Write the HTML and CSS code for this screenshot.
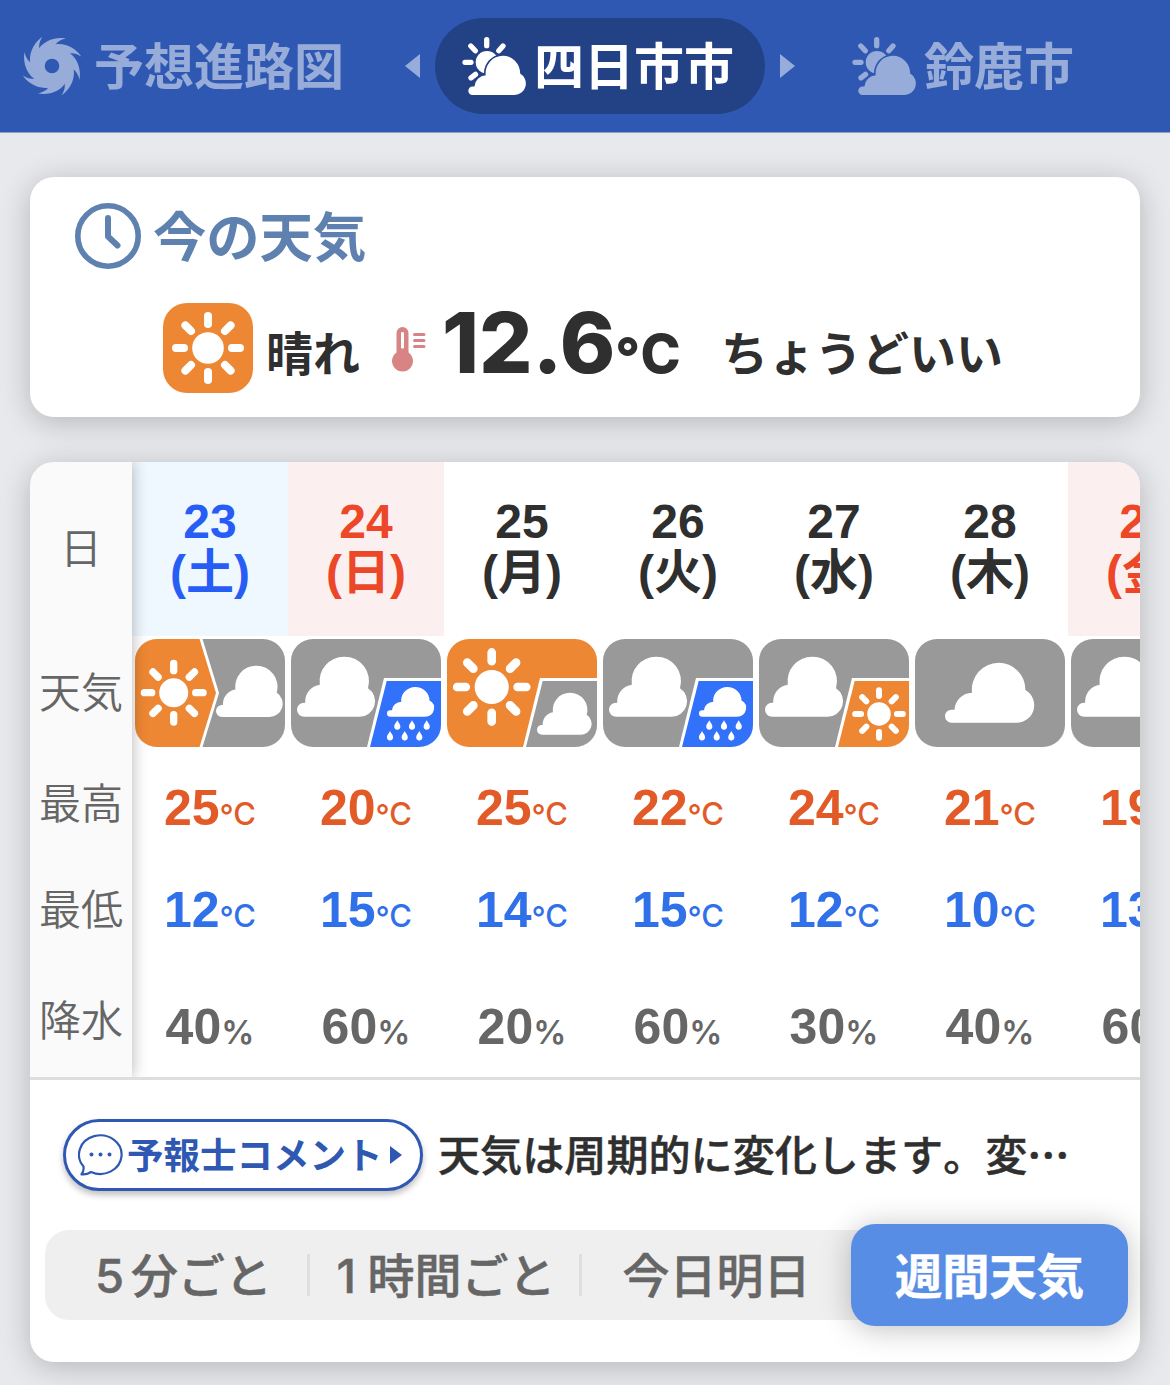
FILE: index.html
```html
<!DOCTYPE html>
<html lang="ja">
<head>
  <meta charset="UTF-8">
  <meta name="viewport" content="width=device-width, initial-scale=1.0">
  <title>四日市市の天気</title>
  <link rel="stylesheet" href="styles.css">
</head>
<body>

  <!-- Shared icon shapes -->
  <svg class="defs" width="0" height="0">
    <defs>
      <g id="sun">
        <circle r="15.8" fill="#fff"/>
        <path d="M0-24V-32M0 24V32M-24 0H-32M24 0H32M-17-17L-22.6-22.6M17-17L22.6-22.6M-17 17L-22.6 22.6M17 17L22.6 22.6" stroke="#fff" stroke-width="8" stroke-linecap="round"/>
      </g>
      <path id="cloud" d="M6.5 60A6.5 6.5 0 0 1 6.5 47H9.5A18 18 0 0 1 27 30A27 27 0 0 1 53.5 0A27 27 0 0 1 80.4 27.3A17.5 17.5 0 0 1 71.8 60Z"/>
      <path id="cloud-tall" d="M7 60A7 7 0 0 1 7 46H8.2A17 17 0 0 1 22.8 28A24.5 24.5 0 0 1 47 0A24.5 24.5 0 0 1 71 31.5A15.5 15.5 0 0 1 62 60Z"/>
      <path id="drop" d="M0 0C.8 2.2 3.1 3.9 3.1 6.3A3.1 3.1 0 0 1-3.1 6.3C-3.1 3.9-.8 2.2 0 0Z"/>
      <path id="blade" d="M-19.5-6C-20-18-10-28 1-30.8C-4-27-7-22-6-16Z"/>
      <mask id="cloud-gap">
        <rect width="64" height="58" fill="#fff"/>
        <use href="#cloud" transform="translate(6.3 18.7) scale(.645 .655)" fill="#000" stroke="#000" stroke-width="5"/>
      </mask>
      <symbol id="partly" viewBox="0 0 64 58">
        <g mask="url(#cloud-gap)">
          <circle cx="25" cy="25.3" r="11.3" fill="#fff"/>
        </g>
        <path d="M24.7 2.7V8.7M3 25.3H9M8.8 9L13.3 13.8M36.8 13.8L41 9M9 40.8L13.5 37.3" stroke="#fff" stroke-width="5.3" stroke-linecap="round"/>
        <use href="#cloud" transform="translate(6.3 18.7) scale(.645 .655)" fill="#fff"/>
      </symbol>
      <symbol id="w-cloud-rain" viewBox="0 0 150 108">
        <rect width="150" height="108" fill="#999"/>
        <use href="#cloud-tall" x="6" y="17.7" fill="#fff"/>
        <path d="M93 39H150V108H76Z" fill="#fff"/>
        <path d="M95.7 42H150V108H79Z" fill="#3272fa"/>
        <use href="#cloud" transform="translate(96 48) scale(.528 .495)" fill="#fff"/>
        <g fill="#fff">
          <use href="#drop" x="106.3" y="81.3"/>
          <use href="#drop" x="121" y="81.3"/>
          <use href="#drop" x="135.7" y="81.3"/>
          <use href="#drop" x="99" y="92"/>
          <use href="#drop" x="113.7" y="92"/>
          <use href="#drop" x="128.3" y="92"/>
        </g>
      </symbol>
    </defs>
  </svg>

  <!-- Area navigation -->
  <header class="header">
    <div class="area area-typhoon">
      <svg class="typhoon" viewBox="-31 -31 62 62" fill="#fff">
        <circle r="13.8" fill="none" stroke="#fff" stroke-width="13"/>
        <use href="#blade" transform="rotate(-20)"/>
        <use href="#blade" transform="rotate(25)"/>
        <use href="#blade" transform="rotate(70)"/>
        <use href="#blade" transform="rotate(115)"/>
        <use href="#blade" transform="rotate(160)"/>
        <use href="#blade" transform="rotate(205)"/>
        <use href="#blade" transform="rotate(250)"/>
        <use href="#blade" transform="rotate(295)"/>
      </svg>
      <span>予想進路図</span>
    </div>
    <span class="arrow arrow-left"></span>
    <div class="area area-current">
      <svg class="partly"><use href="#partly"/></svg>
      <span>四日市市</span>
    </div>
    <span class="arrow arrow-right"></span>
    <div class="area area-next">
      <svg class="partly"><use href="#partly"/></svg>
      <span>鈴鹿市</span>
    </div>
  </header>

  <!-- Current weather -->
  <section class="card now">
    <h2 class="now-title">
      <svg class="clock" viewBox="0 0 66 66" fill="none" stroke="#5f81b0">
        <circle cx="33" cy="33" r="30.2" stroke-width="5.6"/>
        <path d="M33 15V33.5L42.5 42.5" stroke-width="6" stroke-linecap="round" stroke-linejoin="round"/>
      </svg>
      <span>今の天気</span>
    </h2>
    <div class="now-body">
      <svg class="now-icon" viewBox="-45 -45 90 90"><use href="#sun"/></svg>
      <span class="now-label">晴れ</span>
      <svg class="thermo" viewBox="0 0 34 46">
        <path d="M4.5 6A6 6 0 0 1 16.5 6V25.5A10.5 10.5 0 1 1 4.5 25.5Z" fill="#d98484"/>
        <rect x="9" y="5" width="3" height="16.5" rx="1.2" fill="#fff"/>
        <path d="M22.5 7.5H32M22.5 13.5H32M22.5 19.5H32" stroke="#d98484" stroke-width="3" stroke-linecap="round"/>
      </svg>
      <span class="now-temp">12.6<small><i>°</i>C</small></span>
      <span class="now-feel">ちょうどいい</span>
    </div>
  </section>

  <!-- Weekly forecast -->
  <section class="card week">
    <div class="table">
      <div class="labels">
        <div class="l-date">日</div>
        <div class="l-icon">天気</div>
        <div class="l-temp">最高</div>
        <div class="l-temp">最低</div>
        <div class="l-rain">降水</div>
      </div>
      <div class="days">
        <div class="day">
          <div class="date sat">23<br>(土)</div>
          <svg class="tile" viewBox="0 0 150 108">
            <rect width="150" height="108" fill="#999"/>
            <path d="M0 0H67.5L84 54L67.5 108H0Z" fill="#fff"/>
            <path d="M0 0H64.5L81 54L64.5 108H0Z" fill="#ed8733"/>
            <use href="#sun" transform="translate(38.7 53.7) scale(.917)"/>
            <use href="#cloud-tall" transform="translate(81 26.7) scale(.854)" fill="#fff"/>
          </svg>
          <div class="high">25<small><i>°</i>C</small></div>
          <div class="low">12<small><i>°</i>C</small></div>
          <div class="rain">40<small>%</small></div>
        </div>
        <div class="day">
          <div class="date sun">24<br>(日)</div>
          <svg class="tile"><use href="#w-cloud-rain"/></svg>
          <div class="high">20<small><i>°</i>C</small></div>
          <div class="low">15<small><i>°</i>C</small></div>
          <div class="rain">60<small>%</small></div>
        </div>
        <div class="day">
          <div class="date">25<br>(月)</div>
          <svg class="tile" viewBox="0 0 150 108">
            <rect width="150" height="108" fill="#ed8733"/>
            <use href="#sun" transform="translate(44.7 48) scale(1.08)"/>
            <path d="M93 39H150V108H76Z" fill="#fff"/>
            <path d="M95.7 42H150V108H79Z" fill="#999"/>
            <use href="#cloud-tall" transform="translate(90 53.7) scale(.7)" fill="#fff"/>
          </svg>
          <div class="high">25<small><i>°</i>C</small></div>
          <div class="low">14<small><i>°</i>C</small></div>
          <div class="rain">20<small>%</small></div>
        </div>
        <div class="day">
          <div class="date">26<br>(火)</div>
          <svg class="tile"><use href="#w-cloud-rain"/></svg>
          <div class="high">22<small><i>°</i>C</small></div>
          <div class="low">15<small><i>°</i>C</small></div>
          <div class="rain">60<small>%</small></div>
        </div>
        <div class="day">
          <div class="date">27<br>(水)</div>
          <svg class="tile" viewBox="0 0 150 108">
            <rect width="150" height="108" fill="#999"/>
            <use href="#cloud-tall" x="6" y="17.7" fill="#fff"/>
            <path d="M93 39H150V108H76Z" fill="#fff"/>
            <path d="M95.7 42H150V108H79Z" fill="#ed8733"/>
            <use href="#sun" transform="translate(120 75) scale(.745)"/>
          </svg>
          <div class="high">24<small><i>°</i>C</small></div>
          <div class="low">12<small><i>°</i>C</small></div>
          <div class="rain">30<small>%</small></div>
        </div>
        <div class="day">
          <div class="date">28<br>(木)</div>
          <svg class="tile" viewBox="0 0 150 108">
            <rect width="150" height="108" fill="#999"/>
            <use href="#cloud" x="30" y="23.7" fill="#fff"/>
          </svg>
          <div class="high">21<small><i>°</i>C</small></div>
          <div class="low">10<small><i>°</i>C</small></div>
          <div class="rain">40<small>%</small></div>
        </div>
        <div class="day">
          <div class="date sun">29<br>(金)</div>
          <svg class="tile"><use href="#w-cloud-rain"/></svg>
          <div class="high">19<small><i>°</i>C</small></div>
          <div class="low">13<small><i>°</i>C</small></div>
          <div class="rain">60<small>%</small></div>
        </div>
      </div>
    </div>

    <div class="comment">
      <button class="comment-btn">
        <svg class="bubble" viewBox="0 0 46 42" fill="none" stroke="#2e58b2" stroke-width="2.2">
          <path d="M5.5 32.5A21.3 19.3 0 1 1 13 38C10 40 7 40.7 3.5 40.3C5 38.500 6 36 5.500 32.500Z" stroke-linejoin="round"/>
          <path d="M13.5 20.5H13.51M22.5 20.5H22.51M31.5 20.5H31.51" stroke-width="4" stroke-linecap="round"/>
        </svg>
        <span class="comment-label">予報士コメント</span>
        <span class="comment-arrow"></span>
      </button>
      <p>天気は周期的に変化します。変<b>…</b></p>
    </div>

    <nav class="tabs">
      <a class="tab tab-min"><b>5</b>分ごと</a>
      <a class="tab tab-hour"><b>1</b>時間ごと</a>
      <a class="tab tab-day">今日明日</a>
      <a class="tab active">週間天気</a>
    </nav>
  </section>

</body>
</html>
```
FILE: styles.css
```css
* {
  margin: 0;
  padding: 0;
  box-sizing: border-box;
}

body {
  min-height: 1385px;
  font-family: "Noto Sans CJK JP", sans-serif;
  background-color: #e8e9ec;
  color: #2f2f2f;
}

svg {
  display: block;
  flex-shrink: 0;
}

.defs {
  position: absolute;
}

/* Area navigation */
.header {
  display: flex;
  align-items: center;
  height: 133px;
  background-color: #2e58b2;
  border-bottom: 1px solid #8f9fc8;
  color: #fff;
  font-size: 50px;
  font-weight: 700;
  line-height: 96px;
  white-space: nowrap;
}

.area {
  display: flex;
  align-items: center;
  height: 96px;
}

.area span {
  padding-bottom: 6px;
}

.area-typhoon {
  width: 405px;
  padding-left: 21px;
  opacity: 0.5;
}

.typhoon {
  width: 62px;
  height: 62px;
  margin-right: 11px;
}

.area-current {
  width: 330px;
  margin: 0 15px;
  padding-left: 27px;
  border-radius: 48px;
  background-color: #234185;
}

.partly {
  width: 64px;
  height: 58px;
  margin-right: 8px;
}

.area-next {
  padding-left: 57px;
  opacity: 0.5;
}

.arrow {
  border: 12px solid transparent;
  opacity: 0.5;
}

.arrow-left {
  border-left: 0;
  border-right: 15px solid #fff;
}

.arrow-right {
  border-right: 0;
  border-left: 15px solid #fff;
}

/* Cards */
.card {
  margin: 44px 30px 0;
  border-radius: 24px;
  background-color: #fff;
  box-shadow: 0 5px 30px rgba(0, 0, 0, 0.22);
}

.card + .card {
  margin-top: 45px;
}

/* Current weather */
.now {
  height: 240px;
  padding: 26px 45px 0;
}

.now-title {
  display: flex;
  align-items: center;
  height: 66px;
  color: #5f81b0;
  font-size: 53.3px;
  line-height: 62px;
}

.now-title span {
  padding-bottom: 4px;
}

.clock {
  width: 66px;
  height: 66px;
  margin-right: 12px;
}

.now-body {
  display: flex;
  height: 90px;
  margin-top: 34px;
  padding-left: 88px;
  font-size: 47px;
  font-weight: 700;
  line-height: 90px;
  white-space: nowrap;
}

.now-icon {
  width: 90px;
  height: 90px;
  margin-right: 13px;
  border-radius: 24px;
  background-color: #ed8733;
}

.now-label,
.now-feel {
  padding-top: 3px;
}

.thermo {
  width: 34px;
  height: 46px;
  margin: 24px 16px 0 32px;
}

.now-temp {
  width: 279px;
  font-family: Inter, sans-serif;
  font-size: 84px;
  font-weight: 800;
  line-height: 80px;
}

.now-temp small {
  font-size: 54px;
  letter-spacing: 1.5px;
}

.now-temp i,
.days i {
  position: relative;
  font-style: normal;
}

.now-temp i {
  top: 4px;
}

.days i {
  top: 2px;
}

/* Weekly forecast */
.week {
  height: 900px;
}

.table {
  display: flex;
  height: 618px;
  border-bottom: 3px solid #dedede;
  border-radius: 24px 24px 0 0;
  overflow: hidden;
}

.labels {
  z-index: 1;
  flex: 0 0 102px;
  background-color: #fafafa;
  box-shadow: 0 0 15px rgba(0, 0, 0, 0.3);
  color: #666;
  font-size: 42px;
  font-weight: 350;
  text-align: center;
}

.l-date {
  height: 174px;
  line-height: 168px;
}

.l-icon {
  height: 114px;
  line-height: 108px;
}

.l-temp {
  height: 106px;
  line-height: 102px;
}

.l-rain {
  height: 115px;
  line-height: 112px;
}

.days {
  display: flex;
  font-family: "Liberation Sans", "Noto Sans CJK JP", sans-serif;
  font-weight: 700;
  text-align: center;
}

.day {
  flex: 0 0 156px;
}

.date {
  height: 174px;
  padding-top: 34px;
  font-size: 48px;
  line-height: 51px;
}

.date.sat {
  background-color: #f0f8ff;
  color: #285df5;
}

.date.sun {
  background-color: #fcefef;
  color: #ec4728;
}

.tile {
  width: 150px;
  height: 108px;
  margin: 3px;
  border-radius: 22px;
}

.high,
.low,
.rain {
  height: 102px;
  font-size: 50px;
  line-height: 116px;
}

.high {
  color: #e15a27;
}

.low {
  color: #3070e8;
}

.rain {
  height: 120px;
  line-height: 146px;
  color: #666;
}

.high small,
.low small {
  font-family: Inter, sans-serif;
  font-size: 31px;
  font-weight: 500;
}

.rain small {
  font-family: Inter, sans-serif;
  font-size: 33px;
  font-weight: 600;
}

/* Forecaster comment */
.comment {
  display: flex;
  align-items: center;
  height: 150px;
  padding-left: 33px;
  font-size: 42.1px;
  font-weight: 500;
  white-space: nowrap;
}

.comment p {
  padding-bottom: 5px;
  font-kerning: none;
  text-spacing-trim: space-all;
  -webkit-text-stroke: 0.5px;
}

.comment-btn {
  display: flex;
  align-items: center;
  width: 360px;
  height: 72px;
  margin-right: 15px;
  padding-left: 12px;
  border: 3px solid #2e58b2;
  border-radius: 36px;
  background-color: #fff;
  box-shadow: 0 4px 6px rgba(0, 0, 0, 0.25);
  color: #2e58b2;
  font-family: inherit;
  font-size: 36.5px;
  font-weight: 700;
  white-space: nowrap;
}

.bubble {
  width: 46px;
  height: 42px;
  margin-right: 3px;
}

.comment-label {
  padding-bottom: 4px;
}

.comment-arrow {
  margin-left: 7px;
  border: 9px solid transparent;
  border-left: 12px solid #2e58b2;
  border-right: 0;
}

/* Period tabs */
.tabs {
  display: flex;
  align-items: center;
  height: 90px;
  margin: 0 12px 0 15px;
  border-radius: 24px;
  background-color: #efefef;
  color: #666;
  font-size: 47px;
  font-weight: 500;
  white-space: nowrap;
  -webkit-text-stroke: 0.5px;
}

.tab {
  height: 42px;
  line-height: 38px;
  text-align: center;
}

.tab b {
  display: inline-block;
  width: 36px;
  font-family: Inter, sans-serif;
  font-weight: 500;
  text-align: left;
}

.tab-min {
  width: 265px;
  padding-left: 15px;
  border-right: 3px solid #dedede;
}

.tab-hour {
  width: 272px;
  padding-left: 3px;
  border-right: 3px solid #dedede;
}

.tab-hour b {
  width: 31px;
}

.tab-day {
  width: 269px;
}

.tab.active {
  width: 277px;
  height: 102px;
  border-radius: 24px;
  background-color: #588de6;
  box-shadow: 0 3px 30px rgba(0, 0, 0, 0.25);
  color: #fff;
  font-size: 47.3px;
  font-weight: 700;
  line-height: 99px;
}
```
